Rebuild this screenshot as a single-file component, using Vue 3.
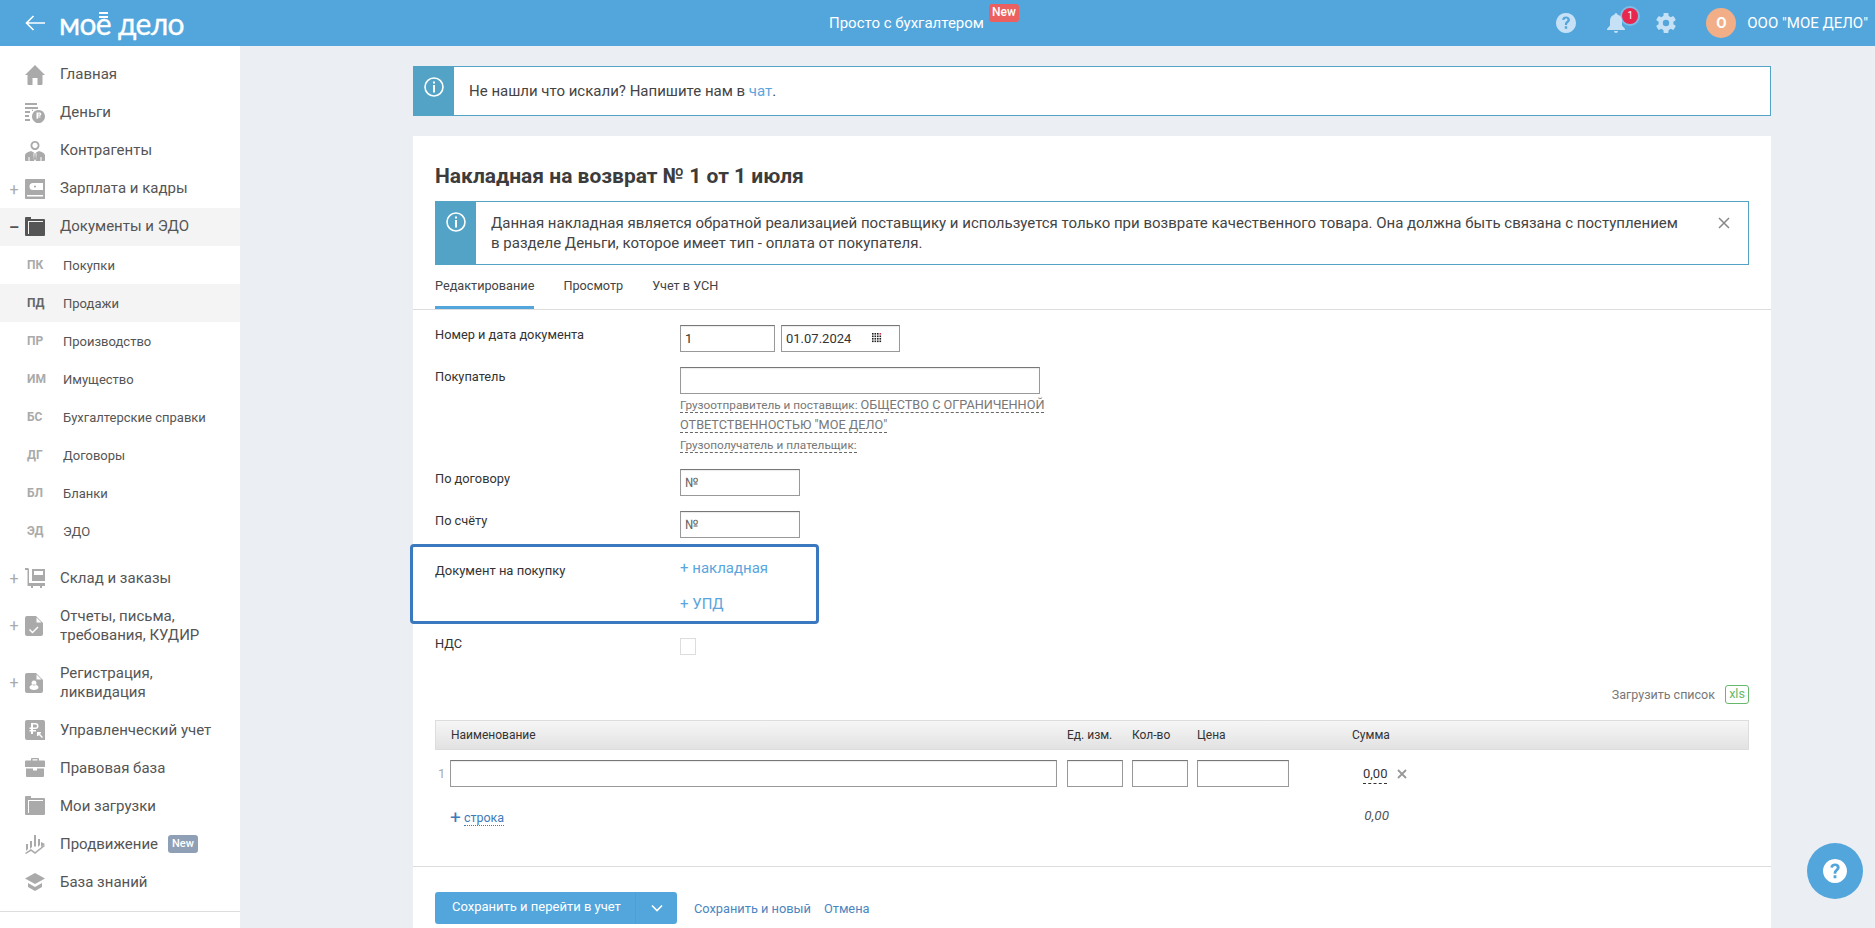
<script setup>
const P = {
  home: 'M10 0L20 10H17.500V19a1 1 0 0 1-1 1H12.500V13H7.500V20H3.500a1 1 0 0 1-1-1V10H0Z',
  money: 'M0 0H12V2H0ZM0 4H13V6H0ZM0 8H5V10H0ZM7 8H8V6.800H7ZM0 12H4V14H0ZM0 16H5V18H0ZM13.500 7a6.500 6.500 0 1 1-.01 0ZM11.500 9.500V15.800H13V14.500H15.500V13.500H13V12.800H15A1.700 1.700 0 0 0 15 9.500ZM13 10.700H14.700A.5 .5 0 0 1 14.700 11.600H13Z',
  people: 'M10 0a4.500 4.500 0 1 1-.01 0ZM10 1.800a2.700 2.700 0 1 0 .01 0ZM6 10L9 11.500 8.500 13 9 20H1a1 1 0 0 1-1-1V14.500C0 12 3 11 6 10ZM14 10L11 11.500 11.500 13 11 20H19a1 1 0 0 0 1-1V14.500C20 12 17 11 14 10ZM9.500 12H10.500L11 18 10 20 9 18ZM3.500 16V20H4.500V16ZM15.500 16V20H16.500V16Z',
  wallet: 'M1 0H20V20H1a1 1 0 0 1-1-1V1a1 1 0 0 1 1-1ZM2 16V17.500H18V16ZM8 4a1.500 1.500 0 0 0 0 7H18V4ZM10 6.500a1 1 0 1 1-.01 0Z',
  folder: 'M1 0H6V2H19a1 1 0 0 1 1 1V18a1 1 0 0 1-1 1H1a1 1 0 0 1-1-1V1a1 1 0 0 1 1-1ZM3 4V17H4V5H18V4Z',
  store: 'M0 0H3L4 1V15H20V18H17V20H15V18H8V20H6V18H2.500V2H0ZM7 1H20V13H7ZM9 3V7H18V3Z',
  report: 'M2 0H11L18 7V18a2 2 0 0 1-2 2H2a2 2 0 0 1-2-2V2a2 2 0 0 1 2-2ZM11.500 1.500V6.500H16.500ZM5 13L7.500 15.500 12.500 10.500 13.500 11.500 7.500 17.500 4 14Z',
  reg: 'M2 0H11L18 7V18a2 2 0 0 1-2 2H2a2 2 0 0 1-2-2V2a2 2 0 0 1 2-2ZM11.500 1.500V6.500H16.500ZM9 7.500a2.500 2.500 0 1 0 .01 0ZM9 11.500C6 11.500 4.500 13 4.500 14.500 4.500 16 6.500 17 9 17S13.500 16 13.500 14.500C13.500 13 12 11.500 9 11.500Z',
  rub: 'M2 0H18a2 2 0 0 1 2 2V20H2a2 2 0 0 1-2-2V2a2 2 0 0 1 2-2ZM6 3V7.500H4.500V9H6V10H4.500V11.500H6V14H8V11.500H11V10H8V9H10.500A3 3 0 0 0 10.500 3ZM8 4.500H10.500A1.500 1.500 0 0 1 10.500 7.500H8ZM12 12V16H13.500V14.500L17 18 18 17 14.500 13.500H16V12Z',
  case: 'M0 3.500a1 1 0 0 1 1-1H6V1a1 1 0 0 1 1-1H13a1 1 0 0 1 1 1V2.500H19a1 1 0 0 1 1 1V9H0ZM7.500 1.300V2.500H12.500V1.300ZM1 10.500H8V12.500H12V10.500H19V18a1 1 0 0 1-1 1H2a1 1 0 0 1-1-1Z',
  chart: 'M1 10H3V15L1 17ZM5 7H7V13L5 15ZM9 1H11V12L10 13 9 12ZM13 5H15V11L13 13ZM16 8L20 10 16 13ZM0 19L6 15 10 18 19 11 20 12 10 20 6 17 1 20Z',
  cap: 'M10 1L20 6.500 10 12 0 6.500ZM3 11L10 15 17 11V15L10 19 3 15Z',
}
const top = [
  { t: 'Главная', i: 'home' },
  { t: 'Деньги', i: 'money' },
  { t: 'Контрагенты', i: 'people' },
  { t: 'Зарплата и кадры', i: 'wallet', m: '+' },
  { t: 'Документы и ЭДО', i: 'folder', m: '–', on: true },
]
const subs = [
  ['ПК', 'Покупки'], ['ПД', 'Продажи', true], ['ПР', 'Производство'], ['ИМ', 'Имущество'],
  ['БС', 'Бухгалтерские справки'], ['ДГ', 'Договоры'], ['БЛ', 'Бланки'], ['ЭД', 'ЭДО'],
]
const rest = [
  { t: 'Склад и заказы', i: 'store', m: '+' },
  { t: 'Отчеты, письма, требования, КУДИР', i: 'report', m: '+', tall: true },
  { t: 'Регистрация, ликвидация', i: 'reg', m: '+', tall: true },
  { t: 'Управленческий учет', i: 'rub' },
  { t: 'Правовая база', i: 'case' },
  { t: 'Мои загрузки', i: 'folder' },
  { t: 'Продвижение', i: 'chart', badge: 'New' },
  { t: 'База знаний', i: 'cap' },
]
const dots = []
for (let y = 0; y < 4; y++) for (let x = 0; x < 4; x++) dots.push({ x: x * 2.5, y: y * 2.5, red: (x === 3 && y === 0) })
</script>

<template>
  <div class="page">
    <header class="top">
      <div class="top-left">
        <svg class="back" viewBox="0 0 20 16" width="20" height="16"><path d="M20 8H1.500M8.500 1L1.500 8l7 7" fill="none" stroke="#fff" stroke-width="1.600"/></svg>
        <div class="logo">мо<span class="logo-e">е<i></i></span> дело</div>
      </div>
      <div class="top-mid">
        <span>Просто с бухгалтером</span>
        <b class="red-new">New</b>
      </div>
      <div class="top-right">
        <svg class="hi" viewBox="0 0 20 20" width="20" height="20"><path fill-rule="evenodd" fill="#c6e1f6" d="M10 0a10 10 0 1 1-.01 0ZM10 3.500C7.800 3.500 6.300 4.700 6.100 6.800L8.400 7.100C8.500 6.100 9 5.500 10 5.500 10.900 5.500 11.500 6 11.500 6.800 11.500 8.200 8.900 8.500 8.900 11.500V12H11.100V11.700C11.100 9.800 13.900 9.400 13.900 6.700 13.900 4.800 12.300 3.500 10 3.500ZM8.800 13.300V15.800H11.200V13.300Z"/></svg>
        <div class="bell">
          <svg viewBox="0 0 20 20" width="20" height="20"><path fill="#c6e1f6" d="M10 0a1.500 1.500 0 0 1 1.400 1.500C14.500 2.300 16 4.800 16 8V12.500L19 16V17H1V16L4 12.500V8C4 4.800 5.500 2.300 8.600 1.500A1.500 1.500 0 0 1 10 0ZM8 18H12A2 2 0 0 1 8 18Z"/></svg>
          <b class="bell-count">1</b>
        </div>
        <svg class="hi" viewBox="0 0 20 20" width="20" height="20">
          <g fill="#c6e1f6">
            <rect v-for="a in [0,60,120]" :key="a" x="7.500" y="0" width="5" height="20" rx="1" :transform="`rotate(${a} 10 10)`"/>
          </g>
          <circle cx="10" cy="10" r="5.500" fill="none" stroke="#c6e1f6" stroke-width="4"/>
          <circle cx="10" cy="10" r="3.200" fill="#53a6dc"/>
        </svg>
        <div class="ava">О</div>
        <span class="org">ООО "МОЕ ДЕЛО"</span>
      </div>
    </header>

    <div class="body">
      <aside class="side">
        <nav class="side-nav">
          <a v-for="r in top" :key="r.t" class="row" :class="{ on: r.on }">
            <span class="mark">{{ r.m }}</span>
            <svg viewBox="0 0 20 20" width="20" height="20" class="ri"><path fill-rule="evenodd" :d="P[r.i]"/></svg>
            <span class="up">{{ r.t }}</span>
          </a>
          <a v-for="s in subs" :key="s[0]" class="sub" :class="{ on: s[2] }">
            <b>{{ s[0] }}</b><span>{{ s[1] }}</span>
          </a>
          <div class="gap"></div>
          <a v-for="r in rest" :key="r.t" class="row" :class="{ tall: r.tall }">
            <span class="mark">{{ r.m }}</span>
            <svg viewBox="0 0 20 20" width="20" height="20" class="ri"><path fill-rule="evenodd" :d="P[r.i]"/></svg>
            <span class="rt">{{ r.t }}</span>
            <b v-if="r.badge" class="grey-new">{{ r.badge }}</b>
          </a>
        </nav>
        <div class="side-line"></div>
      </aside>

      <main class="main">
        <div class="alert first">
          <div class="alert-ic"><svg viewBox="0 0 20 20" width="20" height="20"><circle cx="10" cy="10" r="9" fill="none" stroke="#fff" stroke-width="1.600"/><path d="M9 4.500h2v2H9ZM9 8h2v7.500H9Z" fill="#fff"/></svg></div>
          <p>Не нашли что искали? Напишите нам в <a>чат</a>.</p>
        </div>

        <section class="card">
          <h1>Накладная на возврат № 1 от 1 июля</h1>
          <div class="alert second">
            <div class="alert-ic"><svg viewBox="0 0 20 20" width="20" height="20"><circle cx="10" cy="10" r="9" fill="none" stroke="#fff" stroke-width="1.600"/><path d="M9 4.500h2v2H9ZM9 8h2v7.500H9Z" fill="#fff"/></svg></div>
            <p>Данная накладная является обратной реализацией поставщику и используется только при возврате качественного товара. Она должна быть связана с поступлением<br>в разделе Деньги, которое имеет тип - оплата от покупателя.</p>
            <svg class="close" viewBox="0 0 12 12" width="12" height="12"><path d="M1 1l10 10M11 1L1 11" stroke="#888" stroke-width="1.500"/></svg>
          </div>

          <div class="tabs">
            <a class="tab active">Редактирование</a>
            <a class="tab">Просмотр</a>
            <a class="tab">Учет в УСН</a>
          </div>

          <div class="form">
            <div class="frow">
              <label>Номер и дата документа</label>
              <div class="fval inline">
                <input class="inp w95" value="1" />
                <div class="date">
                  <input class="inp w119" value="01.07.2024" />
                  <svg class="cal" viewBox="0 0 10 10" width="10" height="10"><rect v-for="(d,i) in dots" :key="i" :x="d.x" :y="d.y" width="1.600" height="1.600" :fill="d.red ? '#e8264e' : '#222'"/></svg>
                </div>
              </div>
            </div>
            <div class="frow">
              <label>Покупатель</label>
              <div class="fval">
                <input class="inp w360" />
                <div class="hints">
                  <div><span class="hl">Грузоотправитель и поставщик: <span class="hv">ОБЩЕСТВО С ОГРАНИЧЕННОЙ</span></span></div>
                  <div><span class="hl"><span class="hv">ОТВЕТСТВЕННОСТЬЮ "МОЕ ДЕЛО"</span></span></div>
                  <div><span class="hl">Грузополучатель и плательщик:</span></div>
                </div>
              </div>
            </div>
            <div class="frow">
              <label>По договору</label>
              <div class="fval"><input class="inp w120" placeholder="№" /></div>
            </div>
            <div class="frow">
              <label>По счёту</label>
              <div class="fval"><input class="inp w120" placeholder="№" /></div>
            </div>
            <div class="focus">
              <label>Документ на покупку</label>
              <div class="focus-links">
                <a>+ накладная</a>
                <a>+ УПД</a>
              </div>
            </div>
            <div class="frow nds">
              <label>НДС</label>
              <div class="fval"><span class="check"></span></div>
            </div>
          </div>

          <div class="upload"><span>Загрузить список</span><b>xls</b></div>

          <div class="thead">
            <span>Наименование</span><span>Ед. изм.</span><span>Кол-во</span><span>Цена</span><span>Сумма</span>
          </div>
          <div class="trow">
            <span class="num">1</span>
            <input class="inp" />
            <input class="inp" />
            <input class="inp" />
            <input class="inp" />
            <span class="sum"><span>0,00</span></span>
            <svg viewBox="0 0 10 10" width="10" height="10"><path d="M1 1l8 8M9 1L1 9" stroke="#999" stroke-width="1.800"/></svg>
          </div>
          <div class="tfoot">
            <a class="add"><i>+</i> <span>строка</span></a>
            <em>0,00</em>
          </div>

          <div class="bottom">
            <div class="save">
              <span class="save-t">Сохранить и перейти в учет</span>
              <span class="save-a"><svg viewBox="0 0 12 8" width="12" height="8"><path d="M1 1.500l5 5 5-5" fill="none" stroke="#fff" stroke-width="1.600"/></svg></span>
            </div>
            <a>Сохранить и новый</a>
            <a>Отмена</a>
          </div>
        </section>
      </main>
    </div>

    <div class="help"><svg viewBox="0 0 24 24" width="24" height="24"><path fill-rule="evenodd" fill="#fff" d="M12 0a12 12 0 1 1-.01 0ZM12 4.500C9.300 4.500 7.600 6 7.300 8.400L10 8.800C10.100 7.600 10.800 6.900 12 6.900 13.100 6.900 13.800 7.500 13.800 8.500 13.800 10.200 10.700 10.600 10.700 14.200V14.700H13.300V14.300C13.300 12 16.700 11.500 16.700 8.200 16.700 6 14.800 4.500 12 4.500ZM10.600 16.200V19.200H13.400V16.200Z"/></svg></div>
  </div>
</template>

<style>
html, body { margin: 0; overflow: hidden; }
</style>

<style scoped>
.page { position: relative; height: 928px; overflow: hidden; display: flex; flex-direction: column; font-family: Roboto, "Liberation Sans", sans-serif; color: #444; background: #ebeff3; }

.top { flex: none; height: 46px; background: #53a6dc; display: flex; align-items: center; color: #fff; }
.top-left { width: 829px; display: flex; align-items: center; padding-left: 25px; box-sizing: border-box; }
.back { margin-right: 14px; }
.logo { font-family: Lato, Roboto, sans-serif; font-size: 30px; line-height: 46px; margin-top: -1px; letter-spacing: -.7px; -webkit-text-stroke: .3px #fff; white-space: nowrap; }
.logo-e { position: relative; }
.logo-e i { position: absolute; left: 3px; right: 3px; top: 7px; height: 6px; border-top: 2px solid #fff; border-bottom: 2px solid #fff; box-sizing: border-box; }
.top-mid { display: flex; align-items: center; align-self: stretch; font-size: 15px; }
.red-new { align-self: flex-start; margin: 4px 0 0 5px; width: 30px; height: 18px; border-radius: 3px; background: #ec6060; font-weight: 500; font-size: 12px; line-height: 17px; text-align: center; }
.top-right { margin-left: auto; display: flex; align-items: center; padding-right: 7px; }
.bell { position: relative; width: 20px; height: 20px; margin: 0 30px; }
.bell svg { display: block; }
.bell-count { position: absolute; left: 16px; top: -5px; width: 16px; height: 16px; border-radius: 50%; background: #e8264e; box-shadow: 0 0 0 2px rgba(255,255,255,.25); font-size: 10px; font-weight: 400; line-height: 16px; text-align: center; }
.hi { display: block; }
.ava { width: 30px; height: 30px; border-radius: 50%; background: #f2ae87; margin: 0 11px 0 30px; font-size: 15px; font-weight: 700; line-height: 30px; text-align: center; }
.org { font-size: 15px; white-space: nowrap; }

.body { flex: 1; display: flex; min-height: 0; }
.side { flex: none; width: 240px; background: #fff; padding-top: 10px; box-sizing: border-box; }
.row { display: flex; align-items: center; height: 38px; font-size: 15px; color: #555; }
.row.tall { height: 57px; line-height: 19px; }
.row.on { background: #f4f4f4; }
.row.on .ri { fill: #555; }
.row.on .mark { color: #555; font-weight: 700; }
.up { margin-top: -2px; }
.mark { width: 12px; margin: 0 5px 0 8px; text-align: center; color: #aaa; font-size: 16px; flex: none; }
.ri { flex: none; fill: #aaa; margin-right: 15px; }
.rt { max-width: 165px; }
.grey-new { margin-left: 10px; width: 30px; height: 18px; border-radius: 3px; background: #8f9fb5; color: #fff; font-size: 11px; font-weight: 500; line-height: 17px; text-align: center; }
.sub { display: flex; align-items: center; height: 38px; padding-left: 27px; font-size: 13px; color: #555; }
.sub b { width: 36px; flex: none; font-size: 12px; font-weight: 700; color: #aaa; }
.sub.on { background: #f4f4f4; }
.sub.on b { color: #666; }
.gap { height: 9px; }
.side-line { height: 1px; margin-top: 10px; background: #ddd; }

.main { flex: 1; min-width: 0; padding: 20px 104px 0 173px; box-sizing: border-box; }
.alert { display: flex; background: #fff; border: 1px solid #52a3c6; box-sizing: border-box; }
.alert.first { height: 50px; }
.alert.second { height: 64px; position: relative; margin-bottom: 0; }
.alert-ic { flex: none; width: 40px; background: #52a3c6; padding-top: 10px; display: flex; justify-content: center; align-items: flex-start; box-sizing: border-box; }
.alert p { margin: 0; font-size: 15px; color: #444; }
.alert.first p { padding-left: 15px; line-height: 48px; }
.alert.first a { color: #5aa5dd; }
.alert.second p { padding: 11px 0 0 15px; line-height: 20px; }
.close { position: absolute; right: 18px; top: 15px; }

.card { margin-top: 20px; height: 800px; background: #fff; padding: 26px 22px 0; box-sizing: border-box; }
h1 { margin: 0 0 11px; font-size: 21px; line-height: 28px; font-weight: 700; color: #3c3c3c; }
.tabs { display: flex; height: 45px; box-sizing: border-box; margin: 0 -22px; padding: 0 22px; border-bottom: 1px solid #ddd; }
.tab { font-size: 12.700px; line-height: 41px; height: 44px; box-sizing: border-box; margin-right: 29px; color: #444; }
.tab.active { border-bottom: 3px solid #53a6dc; }

.form { padding-top: 15px; }
.frow { display: flex; margin-bottom: 15px; }
.form label { width: 245px; flex: none; font-size: 12.800px; line-height: 20px; color: #333; }
.fval.inline { display: flex; gap: 6px; }
.inp { display: block; height: 27px; box-sizing: border-box; border: 1px solid #999; border-top-color: #777; box-shadow: inset 0 1px 1px rgba(0,0,0,.08); padding: 0 4px; margin: 0; font: 13px Roboto, sans-serif; color: #333; background: #fff; outline: none; }
.inp::placeholder { color: #666; opacity: 1; }
.w95 { width: 95px; }
.w119 { width: 119px; }
.w360 { width: 360px; }
.w120 { width: 120px; }
.date { position: relative; }
.cal { position: absolute; left: 91px; top: 8px; }
.hints { line-height: 20px; color: #777; width: 380px; }
.hints div { height: 20px; white-space: nowrap; }
.hl { font-size: 11.800px; border-bottom: 1px dashed #666; }
.hv { font-size: 12.700px; }
.focus { display: flex; margin: -9px 0 10px -25px; width: 409px; height: 80px; box-sizing: border-box; border: 3px solid #3a78bf; border-radius: 4px; padding: 9px 0 0 22px; }
.form .focus label { padding-top: 5px; font-size: 13px; }
.focus-links { display: flex; flex-direction: column; gap: 12px; }
.focus-links a { color: #5aa5dd; font-size: 15px; line-height: 24px; }
.nds { margin-bottom: 0; height: 21px; }
.check { display: block; width: 16px; height: 17px; margin-top: 4px; border: 1px solid #ddd; box-sizing: border-box; }

.upload { display: flex; justify-content: flex-end; align-items: center; height: 19px; margin-top: 30px; font-size: 12.500px; color: #777; }
.upload b { margin-left: 10px; width: 24px; height: 19px; box-sizing: border-box; border: 1px solid #66b96a; border-radius: 3px; color: #66b96a; font-weight: 400; font-size: 12.500px; line-height: 16px; text-align: center; }
.thead { display: grid; grid-template-columns: 616px 65px 65px 155px 1fr; align-items: center; height: 30px; margin-top: 16px; padding-left: 15px; box-sizing: border-box; border: 1px solid #ddd; background: linear-gradient(#f6f6f6, #e2e2e2); font-size: 12px; color: #333; }
.trow { display: grid; grid-template-columns: 15px 607px 10px 56px 9px 56px 9px 92px 74px 26px 8px 10px; align-items: center; height: 27px; margin-top: 10px; font-size: 13px; }
.trow .inp { width: 100%; }
.trow .inp:nth-of-type(1) { grid-column: 2; }
.trow .inp:nth-of-type(2) { grid-column: 4; }
.trow .inp:nth-of-type(3) { grid-column: 6; }
.trow .inp:nth-of-type(4) { grid-column: 8; }
.trow .sum { grid-column: 10; }
.trow svg { grid-column: 12; }
.num { color: #aaa; padding-left: 3px; }
.sum { white-space: nowrap; }
.sum span { border-bottom: 1px dashed #333; color: #333; padding-bottom: 2px; }
.tfoot { position: relative; display: flex; height: 26px; margin-top: 17px; padding-left: 15px; align-items: center; font-size: 12.500px; }
.add { color: #3f7ab8; }
.add i { font-style: normal; font-size: 19px; line-height: 1; vertical-align: -2px; }
.add span { border-bottom: 1px dotted #3f7ab8; }
.tfoot em { margin-left: auto; margin-right: 360px; font-size: 13.500px; color: #555; position: relative; top: -2px; }

.bottom { display: flex; align-items: center; margin: 36px -22px 0; padding: 25px 22px 0; border-top: 1px solid #ddd; font-size: 12.800px; color: #4a86c0; }
.save { display: flex; width: 242px; height: 32px; border-radius: 3px; background: #53a6dc; color: #fff; margin-right: 17px; font-size: 13px; }
.save-t { width: 201px; padding-left: 17px; box-sizing: border-box; line-height: 30px; white-space: nowrap; border-right: 1px solid #4f9fd4; }
.save-a { flex: 1; display: flex; align-items: center; justify-content: center; }
.bottom > a { margin-right: 13px; }

.help { position: absolute; left: 1807px; top: 843px; width: 56px; height: 56px; border-radius: 50%; background: #53a6dc; display: flex; align-items: center; justify-content: center; }
.help svg { display: block; }
</style>
